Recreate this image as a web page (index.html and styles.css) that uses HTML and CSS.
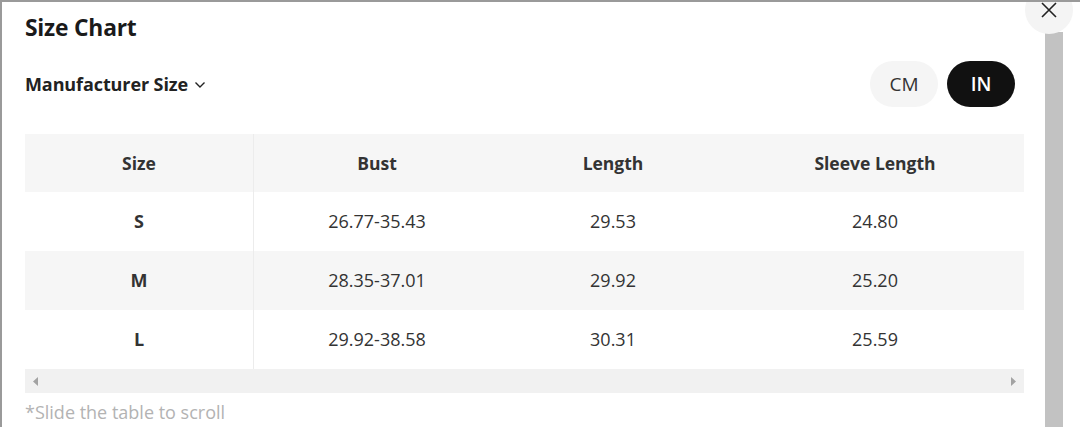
FILE: index.html
```html
<!DOCTYPE html>
<html>
<head>
<meta charset="utf-8">
<link rel="stylesheet" href="styles.css">
</head>
<body>
<div class="frame">
  <div class="content">
    <h1 class="title">Size Chart</h1>
    <div class="toolbar">
      <div class="mfr">Manufacturer Size
        <svg class="chev" width="12" height="8" viewBox="0 0 12 8"><path d="M1.5 1.5 L6 6 L10.5 1.5" fill="none" stroke="#222" stroke-width="1.4"/></svg>
      </div>
      <div class="units">
        <span class="pill">CM</span>
        <span class="pill active">IN</span>
      </div>
    </div>
    <div class="table-wrap">
      <div class="table">
        <div class="row head">
          <div class="cell first">Size</div>
          <div class="cell c2">Bust</div>
          <div class="cell c3">Length</div>
          <div class="cell c4">Sleeve Length</div>
        </div>
        <div class="row">
          <div class="cell first">S</div>
          <div class="cell c2">26.77-35.43</div>
          <div class="cell c3">29.53</div>
          <div class="cell c4">24.80</div>
        </div>
        <div class="row alt">
          <div class="cell first">M</div>
          <div class="cell c2">28.35-37.01</div>
          <div class="cell c3">29.92</div>
          <div class="cell c4">25.20</div>
        </div>
        <div class="row">
          <div class="cell first">L</div>
          <div class="cell c2">29.92-38.58</div>
          <div class="cell c3">30.31</div>
          <div class="cell c4">25.59</div>
        </div>
      </div>
      <div class="hscroll">
        <svg width="6" height="9" viewBox="0 0 6 9"><path d="M5 0 L0 4.5 L5 9 Z" fill="#a3a3a3"/></svg>
        <svg width="6" height="9" viewBox="0 0 6 9"><path d="M1 0 L6 4.5 L1 9 Z" fill="#a3a3a3"/></svg>
      </div>
    </div>
    <p class="note">*Slide the table to scroll</p>
  </div>
  <div class="vscroll"><div class="thumb"></div></div>
  <button class="close" aria-label="close">
    <svg width="16" height="16" viewBox="0 0 16 16"><path d="M1 1 L15 15 M15 1 L1 15" stroke="#222" stroke-width="1.6" fill="none"/></svg>
  </button>
</div>
</body>
</html>
```

FILE: styles.css
```css
* { box-sizing: border-box; }
html, body { margin: 0; padding: 0; background: #fff; }
body {
  font-family: "Open Sans", "Noto Sans", sans-serif;
  color: #222;
  width: 1080px;
  height: 427px;
  overflow: hidden;
}
.frame {
  position: relative;
  display: flex;
  height: 427px;
  border-top: 2px solid #9a9a9a;
  border-left: 2px solid #9a9a9a;
  overflow: hidden;
}
.content {
  width: 1022px;
  padding-left: 23px;
}
.title {
  margin: 11px 0 0;
  font-size: 22.8px;
  font-weight: 700;
  line-height: 30px;
  color: #1a1a1a;
  letter-spacing: -0.2px;
}
.toolbar {
  display: flex;
  justify-content: space-between;
  align-items: center;
  margin-top: 18px;
  height: 46px;
  padding-right: 9px;
}
.mfr {
  font-size: 18px;
  font-weight: 700;
  color: #222;
  display: flex;
  align-items: center;
  gap: 6px;
  letter-spacing: -0.1px;
}
.chev { margin-top: 2px; }
.units {
  display: flex;
  gap: 9px;
}
.pill {
  width: 68px;
  height: 46px;
  border-radius: 23px;
  background: #f5f5f5;
  color: #333;
  font-size: 19px;
  display: flex;
  align-items: center;
  justify-content: center;
}
.pill.active {
  background: #111;
  color: #fff;
  font-weight: 600;
}
.table-wrap {
  margin-top: 27px;
  width: 999px;
}
.table { width: 999px; }
.row {
  display: grid;
  grid-template-columns: 229px 246px 226px 298px;
  height: 59px;
  background: #fff;
}
.row.head { height: 58px; background: #f6f6f6; }
.row.alt { background: #f6f6f6; }
.cell {
  display: flex;
  align-items: center;
  justify-content: center;
  font-size: 18px;
  color: #333;
  padding-bottom: 1px;
}
.cell.first {
  font-weight: 700;
  border-right: 1px solid #ececec;
}
.head .cell { font-weight: 700; color: #333; font-size: 17.5px; }
.hscroll {
  height: 24px;
  background: #f1f1f1;
  display: flex;
  align-items: center;
  justify-content: space-between;
  padding: 0 8px;
}
.note {
  margin: 7px 0 0;
  font-size: 18px;
  color: #b3b3b3;
  line-height: 24px;
}
.vscroll {
  margin-left: 20px;
  margin-top: 30px;
  width: 20px;
  background: #fff;
  padding: 0 1px;
}
.thumb {
  height: 100%;
  background: #c2c2c2;
}
.close {
  position: absolute;
  top: -16px;
  left: 1023px;
  width: 48px;
  height: 48px;
  border-radius: 50%;
  border: 0;
  background: #f4f4f4;
  display: flex;
  align-items: flex-end;
  justify-content: center;
  padding: 0 0 16px;
}
```
